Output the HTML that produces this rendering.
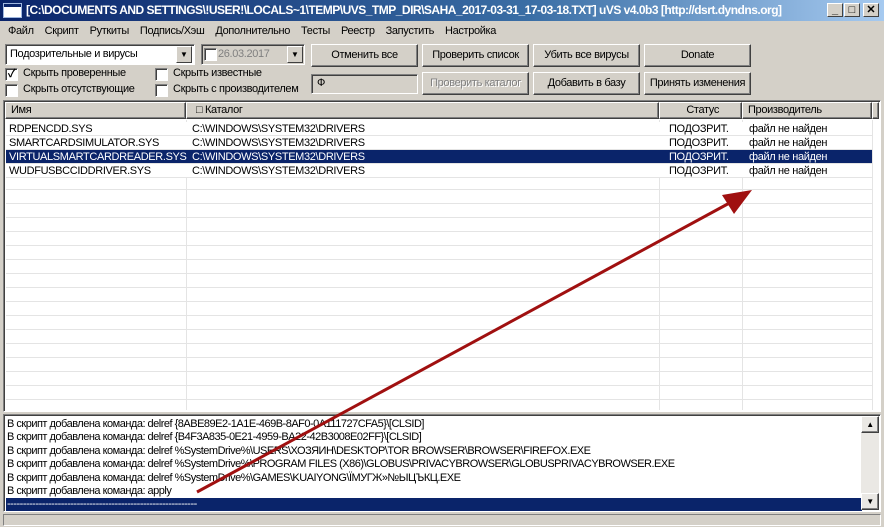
<!DOCTYPE html>
<html><head><meta charset="utf-8"><style>
*{margin:0;padding:0;box-sizing:border-box}
body{width:884px;height:527px;background:#d4d0c8;font-family:"Liberation Sans","Noto Sans CJK SC",sans-serif;font-size:11px;letter-spacing:-0.35px;color:#000;position:relative;overflow:hidden}
.a{position:absolute}
.title{left:0;top:0;width:884px;height:21px;background:linear-gradient(90deg,#0a246a,#3a6ea5 60%,#a6caf0);color:#fff;font-weight:bold;font-size:12px;line-height:21px;padding-left:26px;white-space:nowrap;letter-spacing:-0.5px}
.ico{left:4px;top:4px;width:17px;height:13px;background:#fff;border-top:3px solid #0a246a;outline:1px solid #a0b8e0}
.tb{top:3px;width:16px;height:14px;background:#d4d0c8;border:1px solid;border-color:#fff #404040 #404040 #fff;color:#000;font-size:11px;line-height:12px;text-align:center;font-weight:bold;letter-spacing:0}
.menu{top:22px;left:0;height:19px;line-height:19px;white-space:nowrap}
.menu span{margin-left:8px;margin-right:3px}
.btn{height:23px;border:1px solid;border-color:#fff #404040 #404040 #fff;box-shadow:inset -1px -1px #808080;text-align:center;line-height:21px;white-space:nowrap}
.sunk{border:1px solid;border-color:#808080 #fff #fff #808080;box-shadow:inset 1px 1px #404040}
.cb{width:13px;height:13px;background:#fff;border:1px solid;border-color:#808080 #fff #fff #808080;box-shadow:inset 1px 1px #404040}
.dd{width:16px;height:17px;background:#d4d0c8;border:1px solid;border-color:#fff #404040 #404040 #fff;font-size:8px;text-align:center;line-height:15px;letter-spacing:0}
.row{left:6px;width:866px;height:14px;line-height:14px;white-space:nowrap;border-bottom:1px solid #e4e4e4}
.row span{position:absolute;top:0}
.sel{background:#0a246a;color:#fff}
.log div{height:13.4px;line-height:13.4px;white-space:nowrap;font-size:11px;padding-left:1px;letter-spacing:-0.5px}
</style></head><body>
<div class="a title">[C:\DOCUMENTS AND SETTINGS\!USER!\LOCALS~1\TEMP\UVS_TMP_DIR\SAHA_2017-03-31_17-03-18.TXT] uVS v4.0b3 [http://dsrt.dyndns.org]</div>
<div class="a ico"></div>
<div class="a tb" style="left:827px">_</div>
<div class="a tb" style="left:844px">□</div>
<div class="a tb" style="left:863px">✕</div>
<div class="a menu"><span>Файл</span><span>Скрипт</span><span>Руткиты</span><span>Подпись/Хэш</span><span>Дополнительно</span><span>Тесты</span><span>Реестр</span><span>Запустить</span><span>Настройка</span></div>

<div class="a sunk" style="left:5px;top:44px;width:190px;height:21px;background:#fff;padding:3px 0 0 4px">Подозрительные и вирусы</div>
<div class="a dd" style="left:176px;top:46px">▼</div>
<div class="a sunk" style="left:201px;top:44px;width:104px;height:21px;background:#d4d0c8;padding:3px 0 0 16px;color:#808080">26.03.2017</div>
<div class="a cb" style="left:204px;top:48px"></div>
<div class="a dd" style="left:287px;top:46px">▼</div>
<div class="a btn" style="left:311px;top:44px;width:107px">Отменить все</div>
<div class="a btn" style="left:422px;top:44px;width:107px">Проверить список</div>
<div class="a btn" style="left:533px;top:44px;width:107px">Убить все вирусы</div>
<div class="a btn" style="left:644px;top:44px;width:107px">Donate</div>

<div class="a cb" style="left:5px;top:68px;font-size:11px;line-height:10px;text-align:center;font-weight:bold">✓</div>
<div class="a" style="left:23px;top:67px">Скрыть проверенные</div>
<div class="a cb" style="left:155px;top:68px"></div>
<div class="a" style="left:173px;top:67px">Скрыть известные</div>
<div class="a cb" style="left:5px;top:84px"></div>
<div class="a" style="left:23px;top:83px">Скрыть отсутствующие</div>
<div class="a cb" style="left:155px;top:84px"></div>
<div class="a" style="left:173px;top:83px">Скрыть с производителем</div>
<div class="a sunk" style="left:311px;top:74px;width:107px;height:20px;padding:2px 0 0 5px">Ф</div>
<div class="a btn" style="left:422px;top:72px;width:107px;color:#808080;text-shadow:1px 1px #fff">Проверить каталог</div>
<div class="a btn" style="left:533px;top:72px;width:107px">Добавить в базу</div>
<div class="a btn" style="left:644px;top:72px;width:107px">Принять изменения</div>

<div class="a sunk" style="left:3px;top:100px;width:878px;height:312px;background:#fff"></div>
<div class="a" style="left:5px;top:102px;width:874px;height:17px;background:#d4d0c8"></div>
<div class="a btn" style="left:5px;top:102px;width:181px;height:17px;line-height:15px;text-align:left;padding-left:5px">Имя</div>
<div class="a btn" style="left:186px;top:102px;width:473px;height:17px;line-height:15px;text-align:left;padding-left:9px">□ Каталог</div>
<div class="a btn" style="left:659px;top:102px;width:83px;height:17px;line-height:15px;text-align:right;padding-right:22px">Статус</div>
<div class="a btn" style="left:742px;top:102px;width:130px;height:17px;line-height:15px;text-align:left;padding-left:5px">Производитель</div>
<div class="a btn" style="left:872px;top:102px;width:7px;height:17px"></div>
<div class="a" style="left:186px;top:120px;width:1px;height:290px;background:#e4e4e4"></div>
<div class="a" style="left:659px;top:120px;width:1px;height:290px;background:#e4e4e4"></div>
<div class="a" style="left:742px;top:120px;width:1px;height:290px;background:#e4e4e4"></div>
<div class="a" style="left:872px;top:120px;width:1px;height:290px;background:#e4e4e4"></div>
<div class="a" style="left:6px;top:120px;width:866px;height:290px;background:repeating-linear-gradient(180deg,transparent 0 13px,#e4e4e4 13px 14px)"></div>
<div class="a row" style="top:122px;background:#fff"><span style="left:3px">RDPENCDD.SYS</span><span style="left:186px">C:\WINDOWS\SYSTEM32\DRIVERS</span><span style="left:663px">ПОДОЗРИТ.</span><span style="left:743px">файл не найден</span></div>
<div class="a row" style="top:136px;background:#fff"><span style="left:3px">SMARTCARDSIMULATOR.SYS</span><span style="left:186px">C:\WINDOWS\SYSTEM32\DRIVERS</span><span style="left:663px">ПОДОЗРИТ.</span><span style="left:743px">файл не найден</span></div>
<div class="a row sel" style="top:150px"><span style="left:3px">VIRTUALSMARTCARDREADER.SYS</span><span style="left:186px">C:\WINDOWS\SYSTEM32\DRIVERS</span><span style="left:663px">ПОДОЗРИТ.</span><span style="left:743px">файл не найден</span></div>
<div class="a row" style="top:164px;background:#fff"><span style="left:3px">WUDFUSBCCIDDRIVER.SYS</span><span style="left:186px">C:\WINDOWS\SYSTEM32\DRIVERS</span><span style="left:663px">ПОДОЗРИТ.</span><span style="left:743px">файл не найден</span></div>

<div class="a sunk log" style="left:3px;top:414px;width:878px;height:98px;background:#fff;padding:3px 0 0 2px;overflow:hidden">
<div>В скрипт добавлена команда: delref {8ABE89E2-1A1E-469B-8AF0-0A111727CFA5}\[CLSID]</div>
<div>В скрипт добавлена команда: delref {B4F3A835-0E21-4959-BA22-42B3008E02FF}\[CLSID]</div>
<div>В скрипт добавлена команда: delref %SystemDrive%\USERS\ХОЗЯИН\DESKTOP\TOR BROWSER\BROWSER\FIREFOX.EXE</div>
<div>В скрипт добавлена команда: delref %SystemDrive%\PROGRAM FILES (X86)\GLOBUS\PRIVACYBROWSER\GLOBUSPRIVACYBROWSER.EXE</div>
<div>В скрипт добавлена команда: delref %SystemDrive%\GAMES\KUAIYONG\ЇМУГЖ»№ЫЦЪКЦ.EXE</div>
<div>В скрипт добавлена команда: apply</div>
<div class="sel" style="width:856px">------------------------------------------------------------</div>
</div>
<div class="a" style="left:861px;top:416px;width:18px;height:94px;background:#eae8e4"></div>
<div class="a btn" style="left:861px;top:416px;width:18px;height:17px;font-size:8px;line-height:15px">▲</div>
<div class="a btn" style="left:861px;top:493px;width:18px;height:17px;font-size:8px;line-height:15px">▼</div>
<div class="a sunk" style="left:3px;top:514px;width:878px;height:12px;box-shadow:none"></div>

<svg class="a" style="left:0;top:0" width="884" height="527">
<line x1="197" y1="492" x2="735" y2="200" stroke="#a01010" stroke-width="3"/>
<polygon points="752,190 722,195 734,214" fill="#a01010"/>
</svg>
</body></html>
